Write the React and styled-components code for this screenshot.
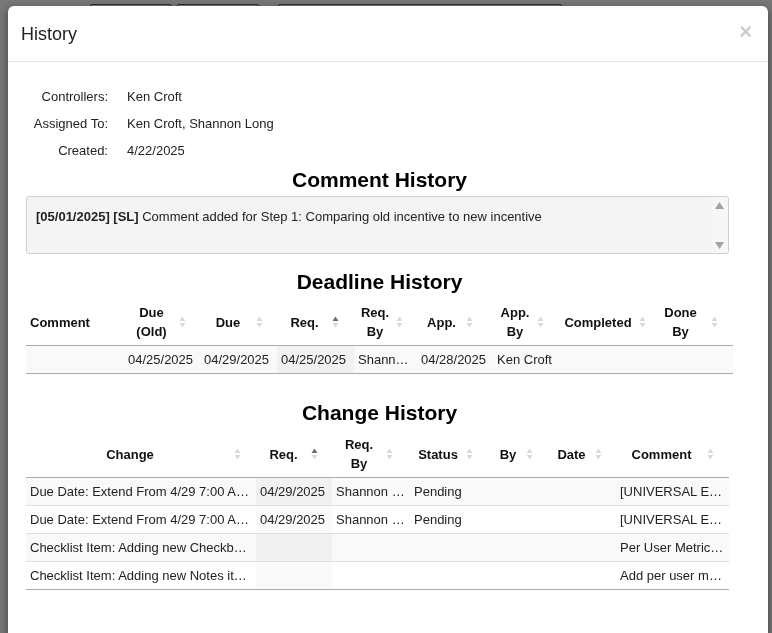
import React from "react";
import styled, { createGlobalStyle } from "styled-components";

const GlobalStyle = createGlobalStyle`
  html, body {
    margin: 0;
    padding: 0;
    height: 100%;
    overflow: hidden;
  }
  body {
    font-family: "Liberation Sans", Arial, sans-serif;
    font-size: 13px;
    color: #222;
    background: #eeeeee;
  }
`;

const Page = styled.div`
  height: 633px;
  background: #efefef;
`;

const PageToolbar = styled.div`
  display: flex;
  gap: 5px;
  padding: 4px 0 0 90px;
`;

const PageButton = styled.div`
  width: ${(p) => p.$w}px;
  height: 26px;
  border: 1px solid #555;
  border-radius: 2px;
  background: #f7f7f7;
  margin-left: ${(p) => p.$ml || 0}px;
`;

const Backdrop = styled.div`
  position: fixed;
  inset: 0;
  background: rgba(0, 0, 0, 0.5);
  padding: 6px 4px 0 8px;
`;

const Modal = styled.div`
  width: 760px;
  background: #fff;
  border-radius: 6px;
  box-shadow: 0 3px 9px rgba(0, 0, 0, 0.5);
  height: 700px;
`;

const ModalHeader = styled.div`
  display: flex;
  align-items: center;
  justify-content: space-between;
  height: 55px;
  padding: 0 16px 0 13px;
  border-bottom: 1px solid #e5e5e5;
`;

const Title = styled.h4`
  margin: 0;
  font-size: 18px;
  font-weight: normal;
  color: #222;
  padding-top: 2px;
`;

const Close = styled.span`
  font-size: 22px;
  font-weight: bold;
  color: #000;
  opacity: 0.2;
  line-height: 1;
  padding-bottom: 4px;
`;

const ModalBody = styled.div`
  padding: 21px 35px 40px 18px;
`;

const InfoGrid = styled.div`
  display: grid;
  grid-template-columns: 82px auto;
  grid-auto-rows: 27px;
  column-gap: 19px;
  align-items: center;
`;

const InfoLabel = styled.div`
  text-align: right;
`;

const InfoValue = styled.div``;

const SectionTitle = styled.h3`
  margin: ${(p) => p.$mt}px 0 0;
  padding-top: 3px;
  text-align: center;
  font-size: 21px;
  line-height: 23px;
  font-weight: bold;
  color: #000;
`;

const CommentBox = styled.div`
  margin: 5px 4px 0 0;
  height: 56px;
  border: 1px solid #cfcfcf;
  border-radius: 3px;
  background: #f4f4f4;
  display: flex;
`;

const CommentText = styled.div`
  flex: 1;
  padding: 12px 9px 10px;
  line-height: 16px;
  b {
    font-weight: bold;
  }
`;

const ScrollTrack = styled.div`
  width: 17px;
  background: #f7f7f7;
  display: flex;
  flex-direction: column;
  justify-content: space-between;
  align-items: center;
  padding: 5px 0 4px;
  border-radius: 0 3px 3px 0;
`;

const Table = styled.table`
  width: ${(p) => p.$w}px;
  margin-top: ${(p) => p.$mt}px;
  border-collapse: collapse;
  table-layout: fixed;
  border-bottom: 1px solid #ababab;

  tbody tr + tr td {
    border-top: 1px solid #dddddd;
  }
`;

const Th = styled.th`
  font-weight: bold;
  line-height: 19px;
  padding: 4px ${(p) => p.$pr}px 4px 4px;
  border-bottom: 1px solid #ababab;
  vertical-align: middle;
  color: #111;
`;

const ThInner = styled.div`
  display: flex;
  align-items: center;
  gap: 4px;
`;

const ThText = styled.span`
  flex: 1;
  text-align: center;
`;

const Tr = styled.tr`
  background: ${(p) => (p.$odd ? "#f9f9f9" : "#fff")};
`;

const Td = styled.td`
  padding: 4px 3px 4px 4px;
  line-height: 19px;
  height: 19px;
  white-space: nowrap;
  overflow: hidden;
  text-overflow: ellipsis;
  background: ${(p) => (p.$sorted ? (p.$odd ? "#f1f1f1" : "#fafafa") : "transparent")};
`;

function SortIcon({ active }) {
  return (
    <svg width="7" height="14" viewBox="0 0 7 14">
      <polygon points="0.5,6 3.5,1.5 6.5,6" fill={active ? "#6a6a6a" : "#d9d9d9"} />
      <polygon points="0.5,8 3.5,12.5 6.5,8" fill="#d9d9d9" />
    </svg>
  );
}

function ScrollArrow({ down }) {
  return (
    <svg width="9" height="7" viewBox="0 0 9 7">
      <polygon points={down ? "0,0 9,0 4.5,7" : "0,7 9,7 4.5,0"} fill="#a3a3a3" />
    </svg>
  );
}

function DataTable({ width, top, columns, rows, sortedCol }) {
  return (
    <Table $w={width} $mt={top}>
      <colgroup>
        {columns.map((c, i) => (
          <col key={i} style={{ width: c.w }} />
        ))}
      </colgroup>
      <thead>
        <tr>
          {columns.map((c, i) => (
            <Th key={i} $pr={c.pr}>
              <ThInner>
                <ThText>
                  {c.label.split("\n").map((l, j) => (
                    <React.Fragment key={j}>
                      {j > 0 && <br />}
                      {l}
                    </React.Fragment>
                  ))}
                </ThText>
                <SortIcon active={i === sortedCol} />
              </ThInner>
            </Th>
          ))}
        </tr>
      </thead>
      <tbody>
        {rows.map((r, ri) => (
          <Tr key={ri} $odd={ri % 2 === 0}>
            {r.map((cell, ci) => (
              <Td key={ci} $sorted={ci === sortedCol} $odd={ri % 2 === 0}>
                {cell}
              </Td>
            ))}
          </Tr>
        ))}
      </tbody>
    </Table>
  );
}

const deadlineCols = [
  { label: "Comment", w: 98, pr: 32 },
  { label: "Due\n(Old)", w: 76, pr: 14 },
  { label: "Due", w: 77, pr: 14 },
  { label: "Req.", w: 77, pr: 15 },
  { label: "Req.\nBy", w: 63, pr: 14 },
  { label: "App.", w: 76, pr: 20 },
  { label: "App.\nBy", w: 64, pr: 13 },
  { label: "Completed", w: 93, pr: 4 },
  { label: "Done\nBy", w: 83, pr: 15 },
];

const deadlineRows = [
  ["", "04/25/2025", "04/29/2025", "04/25/2025", "Shannon Long", "04/28/2025", "Ken Croft", "", ""],
];

const changeCols = [
  { label: "Change", w: 230, pr: 15 },
  { label: "Req.", w: 76, pr: 14 },
  { label: "Req.\nBy", w: 78, pr: 17 },
  { label: "Status", w: 80, pr: 17 },
  { label: "By", w: 58, pr: 15 },
  { label: "Date", w: 68, pr: 14 },
  { label: "Comment", w: 113, pr: 15 },
];

const changeRows = [
  ["Due Date: Extend From 4/29 7:00 AM to 5/2 7:00 AM", "04/29/2025", "Shannon Long", "Pending", "", "", "[UNIVERSAL EXTENSION REQUEST]"],
  ["Due Date: Extend From 4/29 7:00 AM to 5/2 7:00 AM", "04/29/2025", "Shannon Long", "Pending", "", "", "[UNIVERSAL EXTENSION REQUEST]"],
  ["Checklist Item: Adding new Checkbox item", "", "", "", "", "", "Per User Metric Checklist"],
  ["Checklist Item: Adding new Notes item to checklist", "", "", "", "", "", "Add per user metric notes"],
];

export default function App() {
  return (
    <>
      <GlobalStyle />
      <Page>
        <PageToolbar>
          <PageButton $w={80} />
          <PageButton $w={80} />
          <PageButton $w={282} $ml={14} />
        </PageToolbar>
      </Page>
      <Backdrop>
        <Modal>
          <ModalHeader>
            <Title>History</Title>
            <Close>×</Close>
          </ModalHeader>
          <ModalBody>
            <InfoGrid>
              <InfoLabel>Controllers:</InfoLabel>
              <InfoValue>Ken Croft</InfoValue>
              <InfoLabel>Assigned To:</InfoLabel>
              <InfoValue>Ken Croft, Shannon Long</InfoValue>
              <InfoLabel>Created:</InfoLabel>
              <InfoValue>4/22/2025</InfoValue>
            </InfoGrid>

            <SectionTitle $mt={1}>Comment History</SectionTitle>
            <CommentBox>
              <CommentText>
                <b>[05/01/2025] [SL]</b> Comment added for Step 1: Comparing old incentive to new incentive
              </CommentText>
              <ScrollTrack>
                <ScrollArrow />
                <ScrollArrow down />
              </ScrollTrack>
            </CommentBox>

            <SectionTitle $mt={13}>Deadline History</SectionTitle>
            <DataTable width={707} top={6} columns={deadlineCols} rows={deadlineRows} sortedCol={3} />

            <SectionTitle $mt={24}>Change History</SectionTitle>
            <DataTable width={703} top={7} columns={changeCols} rows={changeRows} sortedCol={1} />
          </ModalBody>
        </Modal>
      </Backdrop>
    </>
  );
}
